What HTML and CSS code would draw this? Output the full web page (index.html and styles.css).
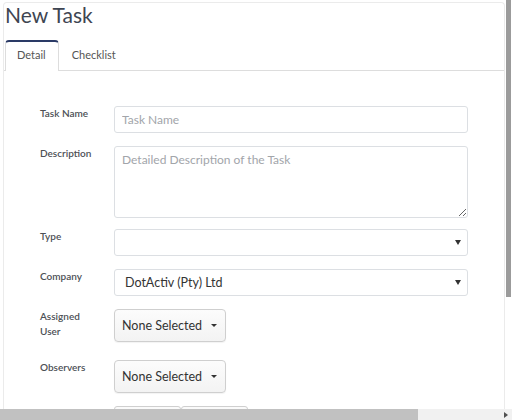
FILE: index.html
```html
<!DOCTYPE html>
<html>
<head>
<meta charset="utf-8">
<link rel="stylesheet" href="styles.css">
</head>
<body>
<div class="frame">
  <div class="viewport">
    <div class="panel">
      <h1 class="title">New Task</h1>
      <div class="tabs">
        <div class="tab active">Detail</div>
        <div class="tab">Checklist</div>
      </div>
      <div class="form">
        <div class="row">
          <label class="lbl">Task Name</label>
          <input class="input" placeholder="Task Name">
        </div>
        <div class="row row-tight">
          <label class="lbl">Description</label>
          <textarea class="input area" placeholder="Detailed Description of the Task"></textarea>
        </div>
        <div class="row">
          <label class="lbl">Type</label>
          <div class="input select"><span></span><span class="arrow"></span></div>
        </div>
        <div class="row">
          <label class="lbl">Company</label>
          <div class="input select"><span class="sel-text">DotActiv (Pty) Ltd</span><span class="arrow"></span></div>
        </div>
        <div class="row row-wide">
          <label class="lbl">Assigned<br>User</label>
          <div class="btn"><span>None Selected</span><span class="caret"></span></div>
        </div>
        <div class="row">
          <label class="lbl">Observers</label>
          <div class="btn"><span>None Selected</span><span class="caret"></span></div>
        </div>
        <div class="row">
          <label class="lbl"></label>
          <div class="pair"><div class="box"></div><div class="box"></div></div>
        </div>
      </div>
    </div>
  </div>
  <div class="vscroll"><div class="vthumb"></div></div>
  <div class="hscroll"><div class="hthumb"></div><div class="harrow"></div></div>
</div>
</body>
</html>
```
FILE: styles.css
```css
html, body {
  margin: 0;
  padding: 0;
  background: #ffffff;
}
body {
  font-family: Lato, "Open Sans", sans-serif;
}
.frame {
  display: grid;
  grid-template-columns: 505px 7px;
  grid-template-rows: 409px 11px;
  width: 512px;
  height: 420px;
  overflow: hidden;
}
.viewport {
  overflow: hidden;
  padding-top: 2px;
  padding-left: 3px;
}
.panel {
  box-sizing: border-box;
  width: 502px;
  min-height: 600px;
  border: 1px solid #ebebeb;
  border-bottom: none;
  border-radius: 4px 4px 0 0;
  background: #ffffff;
}
.title {
  margin: 0;
  padding-left: 1px;
  font-weight: 400;
  font-size: 21px;
  line-height: 24px;
  color: #3e4552;
}
.tabs {
  display: flex;
  margin-top: 13px;
  padding-left: 1px;
  border-bottom: 1px solid #dddddd;
}
.tab {
  font-size: 11px;
  line-height: 26px;
  color: #555555;
  padding: 0 12px 2px 13px;
  border-top: 2px solid transparent;
}
.tab.active {
  padding: 0 12px 3px 11px;
  border: 1px solid #dddddd;
  border-top: 2px solid #2a3a66;
  border-bottom: none;
  border-radius: 4px 4px 0 0;
  background: #ffffff;
  margin-bottom: -1px;
}
.form {
  padding: 35px 0 0 36px;
}
.row {
  display: flex;
  align-items: flex-start;
  margin-bottom: 13px;
}
.row-tight { margin-bottom: 11px; }
.row-wide { margin-bottom: 18px; }
.lbl {
  width: 74px;
  flex: none;
  font-size: 10px;
  font-weight: 600;
  line-height: 15px;
  color: #4d5055;
}
.input {
  box-sizing: border-box;
  display: block;
  width: 354px;
  height: 27px;
  margin: 0;
  border: 1px solid #dcdfe3;
  border-radius: 3px;
  padding: 0 7px;
  font-family: Lato, "Open Sans", sans-serif;
  font-size: 12px;
  color: #333333;
  background: #ffffff;
  outline: none;
}
.input::placeholder {
  color: #a2a5aa;
}
.area {
  height: 72px;
  padding: 4px 7px;
  line-height: 18px;
  resize: vertical;
}
.select {
  display: flex;
  align-items: center;
  justify-content: space-between;
  padding: 0 6px 0 10px;
}
.sel-text {
  font-size: 12.5px;
  color: #333333;
}
.arrow {
  width: 0;
  height: 0;
  border-left: 3px solid transparent;
  border-right: 3px solid transparent;
  border-top: 5px solid #333333;
}
.btn {
  box-sizing: border-box;
  display: flex;
  align-items: center;
  width: 112px;
  height: 33px;
  padding: 0 8px 0 7px;
  border: 1px solid #cfcfcf;
  border-radius: 4px;
  background: linear-gradient(#fcfcfc, #f3f3f3);
  box-shadow: 0 1px 1px rgba(0, 0, 0, 0.05);
  font-size: 12.5px;
  color: #333333;
}
.caret {
  margin-left: auto;
  width: 0;
  height: 0;
  border-left: 3px solid transparent;
  border-right: 3px solid transparent;
  border-top: 3px solid #333333;
}
.pair {
  display: flex;
}
.box {
  box-sizing: border-box;
  width: 67px;
  height: 30px;
  border: 1px solid #cfcfcf;
  border-radius: 3px;
  background: #fafafa;
}
.vscroll {
  background: #ffffff;
}
.vthumb {
  margin-left: 1px;
  width: 5px;
  height: 297px;
  background: #9b9b9b;
}
.hscroll {
  grid-column: 1 / -1;
  display: flex;
  align-items: center;
  background: #f1f1f1;
}
.hthumb {
  width: 418px;
  height: 100%;
  background: #c1c1c1;
}
.harrow {
  margin-left: auto;
  margin-right: 4px;
  width: 0;
  height: 0;
  border-top: 3px solid transparent;
  border-bottom: 3px solid transparent;
  border-left: 4px solid #505050;
}
```
